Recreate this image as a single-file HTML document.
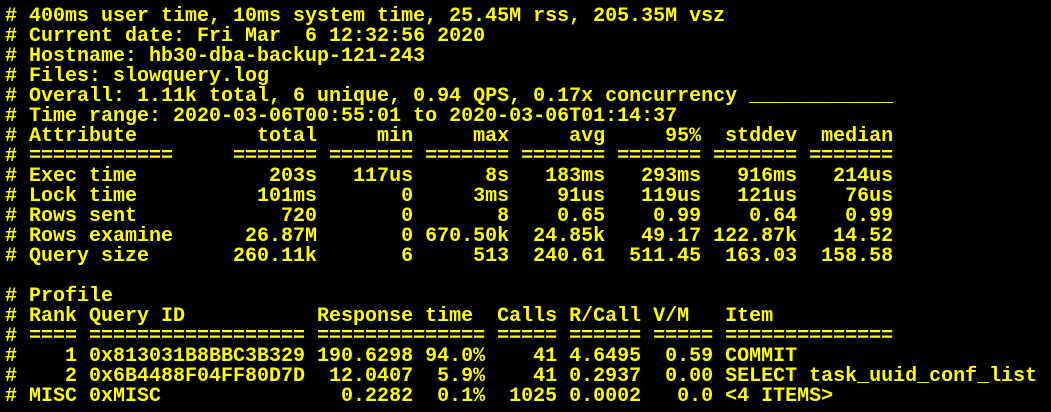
<!DOCTYPE html>
<html><head><meta charset="utf-8"><style>
html,body{margin:0;padding:0;background:#000;width:1051px;height:412px;overflow:hidden}
pre{margin:0;padding:7px 0 0 5px;font-family:"Liberation Mono",monospace;font-size:20px;line-height:20px;color:#ffff00;font-weight:bold;letter-spacing:0}
</style></head><body><pre># 400ms user time, 10ms system time, 25.45M rss, 205.35M vsz
# Current date: Fri Mar  6 12:32:56 2020
# Hostname: hb30-dba-backup-121-243
# Files: slowquery.log
# Overall: 1.11k total, 6 unique, 0.94 QPS, 0.17x concurrency ____________
# Time range: 2020-03-06T00:55:01 to 2020-03-06T01:14:37
# Attribute          total     min     max     avg     95%  stddev  median
# ============     ======= ======= ======= ======= ======= ======= =======
# Exec time           203s   117us      8s   183ms   293ms   916ms   214us
# Lock time          101ms       0     3ms    91us   119us   121us    76us
# Rows sent            720       0       8    0.65    0.99    0.64    0.99
# Rows examine      26.87M       0 670.50k  24.85k   49.17 122.87k   14.52
# Query size       260.11k       6     513  240.61  511.45  163.03  158.58

# Profile
# Rank Query ID           Response time  Calls R/Call V/M   Item
# ==== ================== ============== ===== ====== ===== ==============
#    1 0x813031B8BBC3B329 190.6298 94.0%    41 4.6495  0.59 COMMIT
#    2 0x6B4488F04FF80D7D  12.0407  5.9%    41 0.2937  0.00 SELECT task_uuid_conf_list
# MISC 0xMISC               0.2282  0.1%  1025 0.0002   0.0 &lt;4 ITEMS&gt;
</pre></body></html>
